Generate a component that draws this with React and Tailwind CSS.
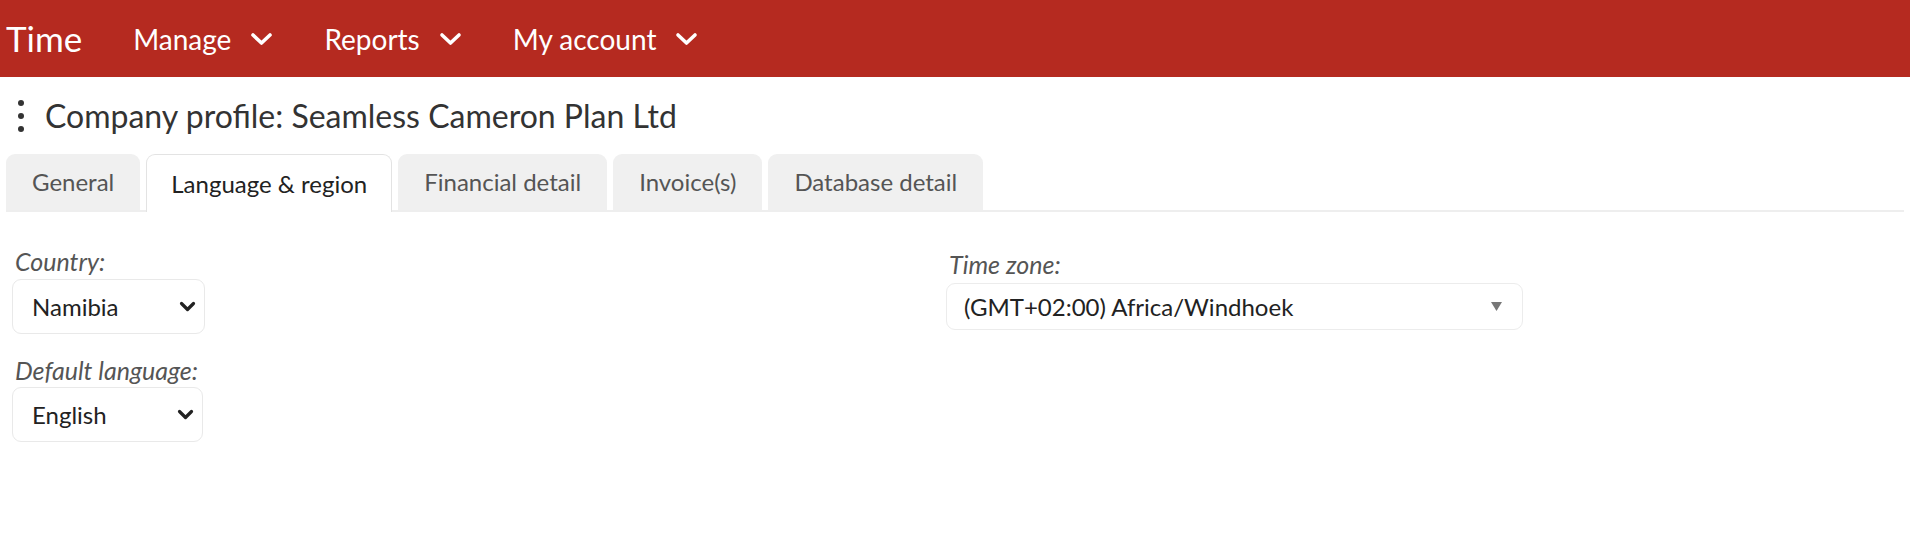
import React from "react";

function Chevron({ className = "" }) {
  return (
    <svg width="23" height="14" viewBox="0 0 23 14" className={className}>
      <polyline points="3,3 11.5,11 20,3" fill="none" stroke="currentColor" strokeWidth="3.6" strokeLinecap="round" strokeLinejoin="round" />
    </svg>
  );
}

function SmallChevron() {
  return (
    <svg width="17" height="11" viewBox="0 0 17 11">
      <polyline points="2.5,2.5 8.5,8.5 14.5,2.5" fill="none" stroke="#222" strokeWidth="3.2" strokeLinecap="round" strokeLinejoin="round" />
    </svg>
  );
}

function NavItem({ label }) {
  return (
    <div className="flex items-center gap-[19px] text-white text-[28px] leading-none">
      <span>{label}</span>
      <Chevron />
    </div>
  );
}

const tabs = ["General", "Language & region", "Financial detail", "Invoice(s)", "Database detail"];

function Select({ value, width }) {
  return (
    <div className={`flex items-center justify-between h-[55px] ${width} pl-[19px] pr-[8px] border border-[#e9e9e9] rounded-[9px] bg-white`}>
      <span className="text-[24px] leading-none text-[#222]">{value}</span>
      <SmallChevron />
    </div>
  );
}

export default function App() {
  return (
    <div className="w-[1910px] h-[538px] bg-white font-['Lato','Noto_Sans',sans-serif]">
      <header className="h-[77px] bg-[#b52a20] flex items-center pl-[6px]">
        <span className="text-white text-[35px] leading-none mr-[51px]">Time</span>
        <div className="flex items-center gap-[51px]">
          <NavItem label="Manage" />
          <NavItem label="Reports" />
          <NavItem label="My account" />
        </div>
      </header>

      <div className="flex items-center h-[77px] pl-[18px]">
        <div className="flex flex-col gap-[7px] mr-[21px]">
          <span className="block w-[6px] h-[6px] rounded-full bg-[#333]" />
          <span className="block w-[6px] h-[6px] rounded-full bg-[#333]" />
          <span className="block w-[6px] h-[6px] rounded-full bg-[#333]" />
        </div>
        <h1 className="text-[32px] text-[#333] leading-none">Company profile: Seamless Cameron Plan Ltd</h1>
      </div>

      <div className="mx-[6px] flex gap-[6px] border-b-2 border-[#eeeeee] h-[58px]">
        {tabs.map((t, i) =>
          i === 1 ? (
            <div key={t} className="flex items-center px-[24px] h-[58px] bg-white border border-b-0 border-[#e3e3e3] rounded-t-[9px] text-[24px] text-[#222] relative -mb-[2px]">
              {t}
            </div>
          ) : (
            <div key={t} className="flex items-center px-[26px] h-[56px] bg-[#f0f0f0] rounded-t-[9px] text-[24px] text-[#555]">
              {t}
            </div>
          )
        )}
      </div>

      <div className="grid grid-cols-[934px_1fr] pl-[12px] pt-[37px]">
        <div className="flex flex-col">
          <label className="italic text-[25px] text-[#555] leading-none pl-[3px] mb-[5px]">Country:</label>
          <Select value="Namibia" width="w-[193px]" />
          <label className="italic text-[25px] text-[#555] leading-none pl-[3px] mt-[24px] mb-[4px]">Default language:</label>
          <Select value="English" width="w-[191px]" />
        </div>
        <div className="flex flex-col pt-[3px]">
          <label className="italic text-[25px] text-[#555] leading-none pl-[3px] mb-[6px]">Time zone:</label>
          <div className="flex items-center justify-between h-[47px] w-[577px] pl-[17px] pr-[20px] border border-[#ececec] rounded-[9px] bg-white">
            <span className="text-[24px] leading-none text-[#222]">(GMT+02:00) Africa/Windhoek</span>
            <svg width="11" height="9" viewBox="0 0 11 9"><polygon points="0,0 11,0 5.5,9" fill="#777" /></svg>
          </div>
        </div>
      </div>
    </div>
  );
}
